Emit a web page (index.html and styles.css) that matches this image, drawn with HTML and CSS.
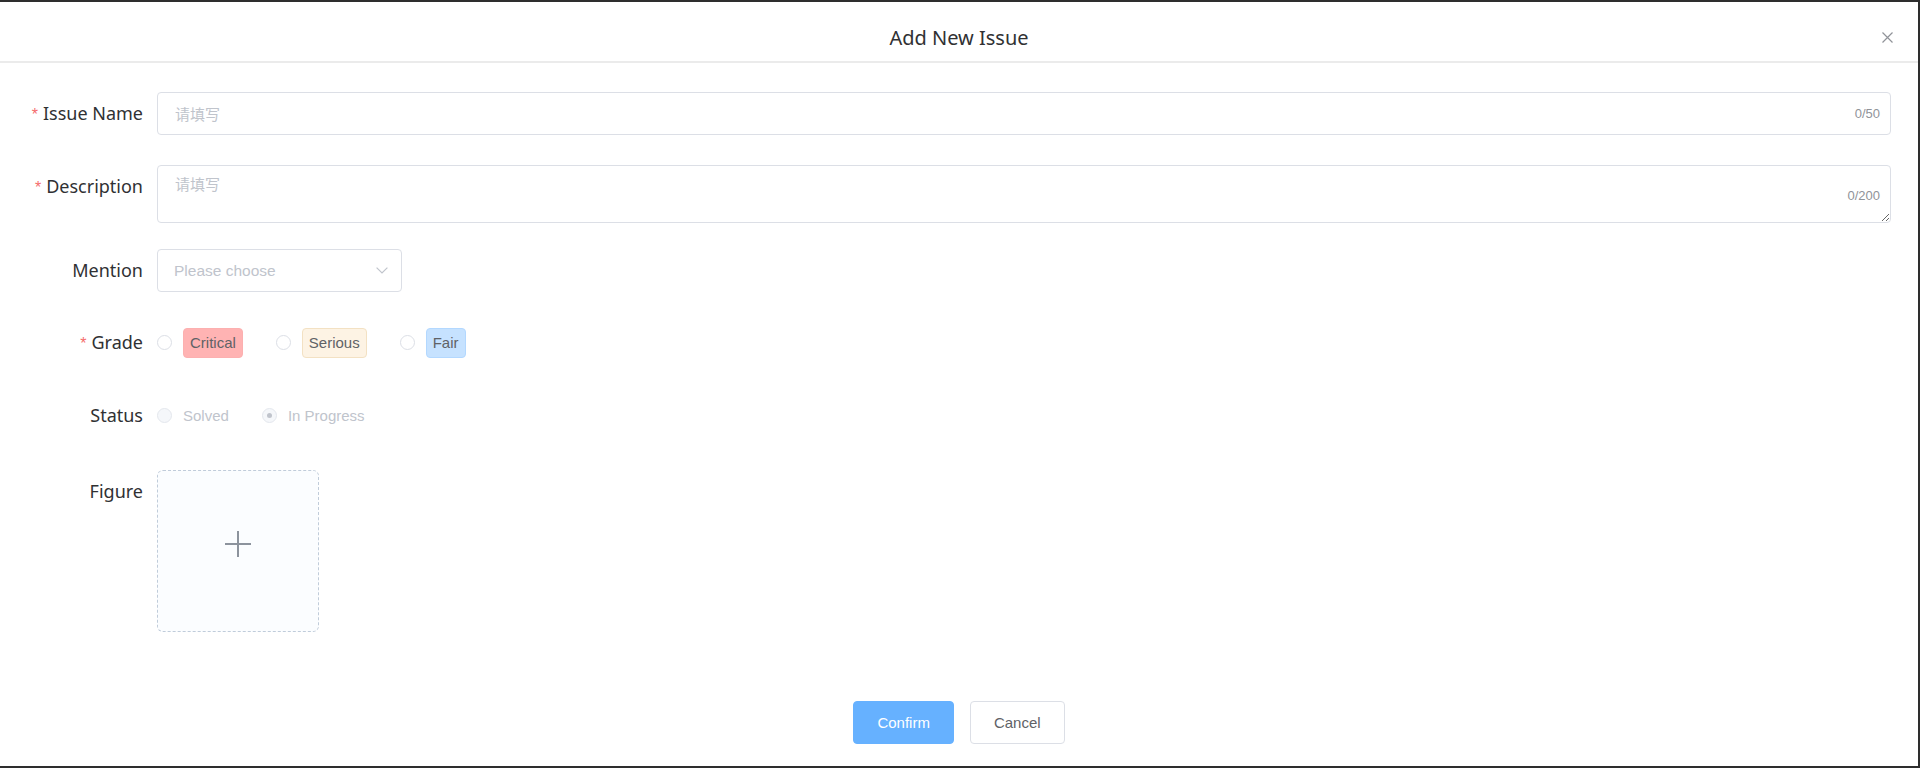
FILE: index.html
```html
<!DOCTYPE html>
<html lang="en">
<head>
<meta charset="utf-8">
<title>Add New Issue</title>
<link rel="stylesheet" href="styles.css">
</head>
<body>
<div class="dialog">
  <header class="dialog-header">
    <h2 class="dialog-title">Add New Issue</h2>
    <button class="dialog-close" type="button" aria-label="Close">
      <svg width="11" height="11" viewBox="0 0 11 11"><path d="M0.5 0.5L10.5 10.5M10.5 0.5L0.5 10.5" stroke="#909399" stroke-width="1.2" fill="none"/></svg>
    </button>
  </header>

  <form class="dialog-body">
    <div class="form-item mb-30">
      <label class="form-label required">Issue Name</label>
      <div class="form-control">
        <div class="input-box">
          <input class="input" type="text" placeholder="请填写">
          <span class="count">0/50</span>
        </div>
      </div>
    </div>

    <div class="form-item mb-26">
      <label class="form-label required">Description</label>
      <div class="form-control">
        <div class="textarea-wrap">
          <textarea class="textarea" placeholder="请填写"></textarea>
          <span class="count count-float">0/200</span>
        </div>
      </div>
    </div>

    <div class="form-item">
      <label class="form-label">Mention</label>
      <div class="form-control">
        <div class="select">
          <span class="select-placeholder">Please choose</span>
          <svg width="12" height="7" viewBox="0 0 12 7"><path d="M0.6 0.6L6 6L11.4 0.6" stroke="#c0c4cc" stroke-width="1.2" fill="none"/></svg>
        </div>
      </div>
    </div>

    <div class="form-item mb-30">
      <label class="form-label required">Grade</label>
      <div class="form-control">
        <div class="radio-group">
          <span class="radio"><span class="radio-input"></span><span class="tag tag-critical">Critical</span></span>
          <span class="radio"><span class="radio-input"></span><span class="tag tag-serious">Serious</span></span>
          <span class="radio"><span class="radio-input"></span><span class="tag tag-fair">Fair</span></span>
        </div>
      </div>
    </div>

    <div class="form-item mb-33">
      <label class="form-label">Status</label>
      <div class="form-control">
        <div class="radio-group">
          <span class="radio"><span class="radio-input is-disabled"></span><span class="radio-text">Solved</span></span>
          <span class="radio"><span class="radio-input is-disabled is-checked"></span><span class="radio-text">In Progress</span></span>
        </div>
      </div>
    </div>

    <div class="form-item">
      <label class="form-label">Figure</label>
      <div class="form-control">
        <div class="upload">
          <svg width="26" height="26" viewBox="0 0 26 26"><path d="M13 0V26M0 13H26" stroke="#8c939d" stroke-width="2" fill="none"/></svg>
        </div>
      </div>
    </div>
  </form>

  <footer class="dialog-footer">
    <button class="btn btn-primary" type="button">Confirm</button>
    <button class="btn" type="button">Cancel</button>
  </footer>
</div>
</body>
</html>
```

FILE: styles.css
```css
* {
  box-sizing: border-box;
}

html,
body {
  margin: 0;
  height: 100%;
}

body {
  background: #2e2e2e;
  font-family: "Noto Sans", "Noto Sans CJK SC", sans-serif;
  overflow: hidden;
}

.dialog {
  margin: 2px 2px 0 0;
  height: 764px;
  background: #fff;
  display: flex;
  flex-direction: column;
}

.dialog-header {
  position: relative;
  height: 61px;
  padding-top: 12px;
  border-bottom: 2px solid #ebebeb;
  display: flex;
  align-items: center;
  justify-content: center;
}

.dialog-title {
  margin: 0;
  font-size: 20px;
  font-weight: 400;
  line-height: 1.35;
  color: #303133;
}

.dialog-close {
  position: absolute;
  top: 30px;
  right: 25px;
  width: 11px;
  height: 11px;
  padding: 0;
  border: 0;
  background: none;
  display: flex;
}

.dialog-body {
  padding: 29px 27px 0 0;
}

.form-item {
  display: flex;
  align-items: flex-start;
  margin-bottom: 29px;
}

.mb-26 { margin-bottom: 26px; }
.mb-30 { margin-bottom: 30px; }
.mb-33 { margin-bottom: 33px; }

.form-label {
  flex: none;
  width: 143px;
  height: 43px;
  text-align: right;
  font-size: 18px;
  line-height: 43px;
  color: #303133;
  white-space: nowrap;
}

.form-label.required::before {
  content: "*";
  color: #f56c6c;
  font-family: "Liberation Sans", Arial, sans-serif;
  font-size: 16px;
  line-height: 1;
  margin-right: 5px;
}

.form-control {
  flex: 1;
  margin-left: 14px;
  min-height: 43px;
  display: flex;
  align-items: center;
}

.input-box {
  width: 100%;
  height: 43px;
  border: 1px solid #dcdfe6;
  border-radius: 4px;
  padding: 0 10px 0 17px;
  display: flex;
  align-items: center;
}

.input {
  flex: 1;
  min-width: 0;
  height: 100%;
  border: 0;
  outline: none;
  padding: 0;
  background: transparent;
  font-family: "Noto Sans CJK SC", sans-serif;
  font-size: 15px;
  color: #606266;
}

.input::placeholder,
.textarea::placeholder {
  color: #c0c4cc;
}

.count {
  font-family: "Liberation Sans", Arial, sans-serif;
  font-size: 13px;
  line-height: 15px;
  color: #909399;
}

.textarea-wrap {
  position: relative;
  width: 100%;
}

.textarea {
  display: block;
  width: 100%;
  height: 58px;
  resize: vertical;
  border: 1px solid #dcdfe6;
  border-radius: 4px;
  padding: 7px 17px;
  outline: none;
  font-family: "Noto Sans CJK SC", sans-serif;
  font-size: 15px;
  line-height: 1.5;
  color: #606266;
}

.count-float {
  position: absolute;
  right: 11px;
  bottom: 20px;
}

.select {
  width: 245px;
  height: 43px;
  border: 1px solid #dcdfe6;
  border-radius: 4px;
  padding: 0 13px 0 16px;
  display: flex;
  align-items: center;
  justify-content: space-between;
}

.select-placeholder {
  font-family: "Liberation Sans", Arial, sans-serif;
  font-size: 15.5px;
  color: #c0c4cc;
}

.radio-group {
  display: flex;
  align-items: center;
  height: 43px;
}

.radio {
  display: inline-flex;
  align-items: center;
  margin-right: 33px;
}

.radio-input {
  width: 15px;
  height: 15px;
  margin-right: 11px;
  border: 1px solid #dcdfe6;
  border-radius: 50%;
  background: #fff;
  display: flex;
  align-items: center;
  justify-content: center;
}

.radio-input.is-disabled {
  background: #f5f7fa;
  border-color: #e4e7ed;
}

.radio-input.is-checked::after {
  content: "";
  width: 5px;
  height: 5px;
  border-radius: 50%;
  background: #c0c4cc;
}

.radio-text {
  font-family: "Liberation Sans", Arial, sans-serif;
  font-size: 15px;
  color: #c0c4cc;
}

.tag {
  display: inline-flex;
  align-items: center;
  height: 30px;
  padding: 0 6px;
  border: 1px solid transparent;
  border-radius: 4px;
  font-family: "Liberation Sans", Arial, sans-serif;
  font-size: 15px;
  color: #606266;
}

.tag-critical {
  background: #ffb3b3;
  border-color: #fcb0b0;
}

.tag-serious {
  background: #fdf3e4;
  border-color: #f3e1c3;
}

.tag-fair {
  background: #c6e2ff;
  border-color: #b3d8ff;
}

.upload {
  width: 162px;
  height: 162px;
  border: 1px dashed #c0ccda;
  border-radius: 6px;
  background: #fbfdff;
  display: flex;
  align-items: flex-start;
  justify-content: center;
  padding-top: 60px;
}

.dialog-footer {
  margin-top: auto;
  padding-bottom: 22px;
  display: flex;
  justify-content: center;
  gap: 16px;
}

.btn {
  height: 43px;
  padding: 0 23px;
  border: 1px solid #dcdfe6;
  border-radius: 4px;
  background: #fff;
  color: #606266;
  font-family: "Liberation Sans", Arial, sans-serif;
  font-size: 15px;
  cursor: pointer;
}

.btn-primary {
  background: #66b1ff;
  border-color: #66b1ff;
  color: #fff;
}
```
